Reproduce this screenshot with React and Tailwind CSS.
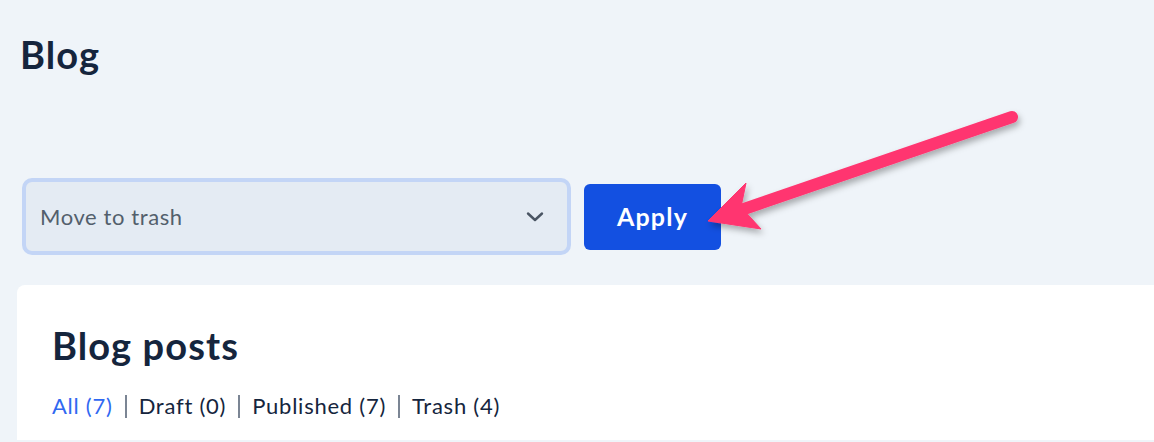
import React from "react";

function Sep() {
  return <span className="mx-[12px] inline-block h-[23px] w-[2px] bg-[#7b8594] align-[-4px]" />;
}

export default function App() {
  return (
    <div
      className="relative min-h-[442px] w-full overflow-hidden bg-[#eff4f9] text-[#15253d]"
      style={{ fontFamily: "Lato, 'Noto Sans', sans-serif" }}
    >
      <div className="pl-[20px] pt-[34px]">
        <h1 className="text-[38px] font-bold leading-[40px] tracking-[1.1px]">Blog</h1>
      </div>

      <div className="mt-[104px] flex items-center pl-[22px]">
        <div className="flex h-[77px] w-[549px] items-center justify-between rounded-[10px] border-4 border-[#c3d5f6] bg-[#e4ebf3] pl-[14px] pr-[22px]">
          <span className="text-[22px] tracking-[0.6px] text-[#535f6c]">Move to trash</span>
          <svg width="20" height="12" viewBox="0 0 20 12" fill="none">
            <path d="M3 2.5 L10 9 L17 2.5" stroke="#4a5563" strokeWidth="2.4" strokeLinecap="round" strokeLinejoin="round" />
          </svg>
        </div>
        <button className="ml-[13px] flex h-[66px] w-[137px] items-center justify-center rounded-[6px] bg-[#1350e1] text-[25px] font-bold tracking-[1.2px] text-white">
          Apply
        </button>
      </div>

      <div className="ml-[17px] mt-[30px] rounded-tl-[8px] bg-white pl-[35px] pt-[40px] pb-[20px]">
        <h2 className="text-[38px] font-bold leading-[40px] tracking-[1.1px]">Blog posts</h2>
        <div className="mt-[27px] text-[22px] leading-[28px] tracking-[0.75px]">
          <span className="text-[#3068f1]">All (7)</span>
          <Sep />
          <span>Draft (0)</span>
          <Sep />
          <span>Published (7)</span>
          <Sep />
          <span>Trash (4)</span>
        </div>
      </div>

      <svg className="pointer-events-none absolute left-0 top-0" width="1154" height="442" viewBox="0 0 1154 442">
        <defs>
          <filter id="sh" x="-20%" y="-50%" width="140%" height="200%">
            <feDropShadow dx="2" dy="4" stdDeviation="3" floodColor="#000" floodOpacity="0.3" />
          </filter>
        </defs>
        <g filter="url(#sh)" fill="#ff3570" stroke="#ff3570">
          <line x1="1012" y1="117" x2="744" y2="209" strokeWidth="12" strokeLinecap="round" />
          <polygon points="708,221 746,183 741,207 761,229" strokeWidth="1" strokeLinejoin="round" />
        </g>
      </svg>
    </div>
  );
}
